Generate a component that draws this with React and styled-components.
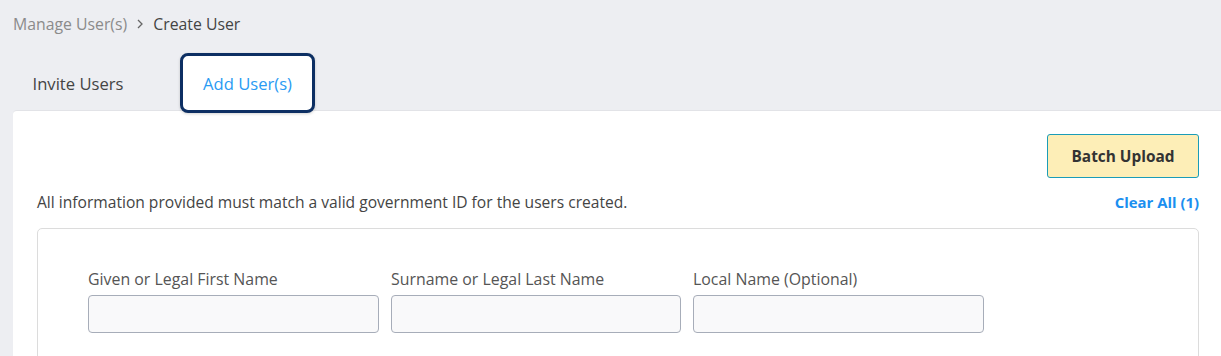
import React from "react";
import styled, { createGlobalStyle } from "styled-components";

const Global = createGlobalStyle`
  html, body { margin: 0; padding: 0; background: #edeef2; }
  body { font-family: "Open Sans", Lato, sans-serif; color: #444; }
  * { box-sizing: border-box; }
`;

const Page = styled.div`
  padding: 0 0 0 13px;
  min-height: 356px;
`;

const Breadcrumb = styled.nav`
  display: flex;
  align-items: center;
  height: 48px;
  font-size: 15.8px;
  gap: 9px;
`;

const Crumb = styled.span`
  color: ${(p) => (p.$current ? "#444" : "#8b8b8b")};
`;

const Chevron = styled.svg`
  width: 8px;
  height: 10px;
`;

const TabsRow = styled.div`
  display: flex;
  align-items: flex-end;
  gap: 32px;
  height: 65px;
  margin-bottom: -3px;
  position: relative;
  z-index: 1;
`;

const Tab = styled.div`
  width: 135px;
  height: 60px;
  display: flex;
  align-items: center;
  justify-content: center;
  font-size: 16.6px;
  ${(p) =>
    p.$active
      ? `
    background: #fff;
    color: #2a9bf3;
    border: 3px solid #0d2f63;
    border-radius: 8px;
    box-shadow: 0 1px 3px rgba(0,0,0,0.18);
  `
      : `
    color: #444;
    padding-right: 5px;
  `}
`;

const Card = styled.div`
  background: #fff;
  border-top: 1px solid #e2e3e7;
  border-top-left-radius: 4px;
  padding: 23px 22px 40px 24px;
  min-height: 250px;
`;

const TopRow = styled.div`
  display: flex;
  justify-content: flex-end;
`;

const BatchButton = styled.button`
  width: 152px;
  height: 44px;
  background: #fdeeb7;
  border: 1px solid #1a9cb8;
  border-radius: 3px;
  font-family: inherit;
  font-size: 15.4px;
  font-weight: 700;
  color: #333;
`;

const InfoRow = styled.div`
  display: flex;
  justify-content: space-between;
  align-items: center;
  margin-top: 14px;
  height: 20px;
  font-size: 15.6px;
`;

const ClearAll = styled.span`
  color: #1b8ff0;
  font-weight: 700;
  font-size: 14.9px;
`;

const FormBox = styled.div`
  margin-top: 16px;
  border: 1px solid #dcdcdc;
  border-radius: 5px;
  padding: 40px 50px 40px 50px;
`;

const Fields = styled.div`
  display: flex;
  gap: 12px;
`;

const Field = styled.label`
  display: flex;
  flex-direction: column;
  width: ${(p) => p.$w}px;
  font-size: 15.9px;
  color: #555;
`;

const LabelText = styled.span`
  height: 20px;
  line-height: 20px;
  margin-bottom: 6px;
  white-space: nowrap;
`;

const Input = styled.input`
  height: 38px;
  background: #f9f9fa;
  border: 1px solid #a7adb9;
  border-radius: 4px;
`;

export default function App() {
  return (
    <>
      <Global />
      <Page>
        <Breadcrumb>
          <Crumb>Manage User(s)</Crumb>
          <Chevron viewBox="0 0 8 10">
            <path d="M2 1l4 4-4 4" fill="none" stroke="#666" strokeWidth="1.3" />
          </Chevron>
          <Crumb $current>Create User</Crumb>
        </Breadcrumb>
        <TabsRow>
          <Tab>Invite Users</Tab>
          <Tab $active>Add User(s)</Tab>
        </TabsRow>
        <Card>
          <TopRow>
            <BatchButton>Batch Upload</BatchButton>
          </TopRow>
          <InfoRow>
            <span>All information provided must match a valid government ID for the users created.</span>
            <ClearAll>Clear All (1)</ClearAll>
          </InfoRow>
          <FormBox>
            <Fields>
              <Field $w={291}>
                <LabelText>Given or Legal First Name</LabelText>
                <Input />
              </Field>
              <Field $w={290}>
                <LabelText>Surname or Legal Last Name</LabelText>
                <Input />
              </Field>
              <Field $w={291}>
                <LabelText>Local Name (Optional)</LabelText>
                <Input />
              </Field>
            </Fields>
          </FormBox>
        </Card>
      </Page>
    </>
  );
}
